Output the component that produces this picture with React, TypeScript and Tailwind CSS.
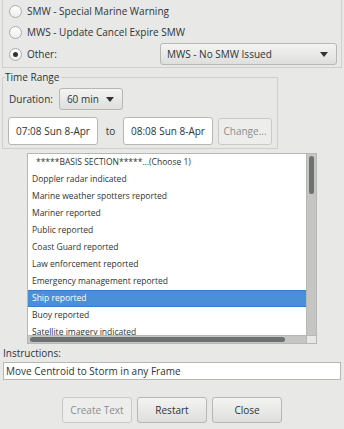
const rows = [
  "Doppler radar indicated",
  "Marine weather spotters reported",
  "Mariner reported",
  "Public reported",
  "Coast Guard reported",
  "Law enforcement reported",
  "Emergency management reported",
  "Ship reported",
  "Buoy reported",
  "Satellite imagery indicated",
];

function Radio({ checked, label }: { checked?: boolean; label: string }) {
  return (
    <div className="flex h-[21px] items-center gap-[5px] pl-[6px]">
      <span className="flex h-[13px] w-[13px] items-center justify-center rounded-full border border-[#a9acad] bg-gradient-to-b from-white to-[#ededed]">
        {checked && <span className="h-[5px] w-[5px] rounded-full bg-[#2e3436]" />}
      </span>
      <span>{label}</span>
    </div>
  );
}

function Arrow() {
  return (
    <svg width="8" height="5" viewBox="0 0 8 5" className="shrink-0">
      <path d="M0 0 H8 L4 5 Z" fill="#2e3436" />
    </svg>
  );
}

export default function App() {
  return (
    <div
      className="h-[429px] w-[344px] overflow-hidden bg-[#e8e8e7] text-[10px] text-[#2e3436]"
      style={{ fontFamily: '"Open Sans", "Noto Sans", sans-serif' }}
    >
      {/* message type choices */}
      <div className="mx-[2px] h-[68px] border-x border-b border-[#cfd0cd] pt-[1px]">
        <Radio label="SMW - Special Marine Warning" />
        <Radio label="MWS - Update Cancel Expire SMW" />
        <div className="flex items-center justify-between pr-[4px]">
          <Radio checked label="Other:" />
          <div className="flex h-[22px] w-[177px] items-center justify-between rounded-[3px] border border-[#b6b8b4] bg-gradient-to-b from-[#f4f4f3] to-[#dedfdc] pl-[6px] pr-[8px]">
            <span>MWS - No SMW Issued</span>
            <Arrow />
          </div>
        </div>
      </div>

      {/* time range */}
      <fieldset className="ml-[2px] mt-[2px] h-[79px] w-[273px] border border-[#cfd0cd] px-[5px]">
        <legend className="ml-[-3px] pr-[2px] leading-[14px]">Time Range</legend>
        <div className="mt-[4px] flex items-center gap-[6px] pl-[1px]">
          <span>Duration:</span>
          <div className="flex h-[22px] w-[64px] items-center justify-between rounded-[3px] border border-[#b6b8b4] bg-gradient-to-b from-[#f4f4f3] to-[#dedfdc] pl-[7px] pr-[8px]">
            <span>60 min</span>
            <Arrow />
          </div>
        </div>
        <div className="mt-[7px] flex items-center">
          <div className="flex h-[28px] w-[90px] items-center justify-center rounded-[3px] border border-[#b6b8b4] bg-white">
            07:08 Sun 8-Apr
          </div>
          <span className="w-[25px] text-center">to</span>
          <div className="flex h-[28px] w-[90px] items-center justify-center rounded-[3px] border border-[#b6b8b4] bg-white">
            08:08 Sun 8-Apr
          </div>
          <div className="ml-[5px] flex h-[27px] w-[54px] items-center justify-center rounded-[3px] border border-[#c9cac7] bg-[#ededec] text-[#8b8e8f]">
            Change...
          </div>
        </div>
      </fieldset>

      {/* basis list */}
      <div className="ml-[27px] mt-[4px] flex h-[191px] w-[290px] flex-col border border-[#b6b8b4] bg-white">
        <div className="flex min-h-0 flex-1">
          <div className="min-w-0 flex-1 overflow-hidden text-[8.5px]">
            <div className="flex h-[17px] items-center whitespace-nowrap pl-[8px]">
              *****BASIS SECTION*****...(Choose 1)
            </div>
            {rows.map((r) => (
              <div
                key={r}
                className={`flex h-[17px] items-center whitespace-nowrap pl-[4px] ${
                  r === "Ship reported"
                    ? "border-y border-[#3a7bd2] bg-[#4a90d9] text-white"
                    : ""
                }`}
              >
                {r}
              </div>
            ))}
          </div>
          <div className="w-[10px] border-l border-[#b6b8b4] bg-[#c5c6c3] px-[2px] pt-[2px]">
            <div className="h-[38px] rounded-full bg-[#6e7072]" />
          </div>
        </div>
        <div className="flex h-[8px] border-t border-[#b6b8b4]">
          <div className="flex-1 bg-[#c5c6c3] px-[2px] pt-[1px]">
            <div className="h-[5px] w-[255px] rounded-full bg-[#6e7072]" />
          </div>
          <div className="w-[10px] border-l border-[#b6b8b4] bg-[#e8e8e7]" />
        </div>
      </div>

      {/* instructions */}
      <div className="mt-[2px] pl-[3px] leading-[14px]">Instructions:</div>
      <div className="mx-[3px] mt-[2px] flex h-[18px] items-center border border-[#b6b8b4] bg-white pl-[2px]">
        Move Centroid to Storm in any Frame
      </div>

      {/* actions */}
      <div className="mt-[17px] flex gap-[5px] pl-[62px]">
        <div className="flex h-[26px] w-[70px] items-center justify-center rounded-[3px] border border-[#c9cac7] bg-[#ededec] text-[#8b8e8f]">
          Create Text
        </div>
        <div className="flex h-[26px] w-[70px] items-center justify-center rounded-[3px] border border-[#b6b8b4] bg-gradient-to-b from-[#f4f4f3] to-[#dedfdc]">
          Restart
        </div>
        <div className="flex h-[26px] w-[70px] items-center justify-center rounded-[3px] border border-[#b6b8b4] bg-gradient-to-b from-[#f4f4f3] to-[#dedfdc]">
          Close
        </div>
      </div>
    </div>
  );
}
